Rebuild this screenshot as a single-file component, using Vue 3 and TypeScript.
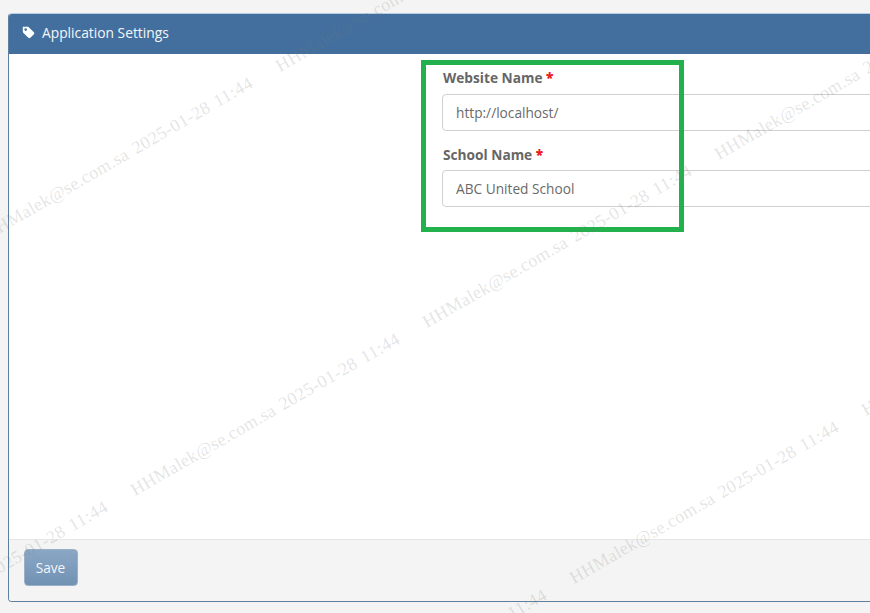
<script setup lang="ts">
interface Mark { x: number; y: number }
const marks: Mark[] = []
for (let i = -2; i <= 3; i++) {
  for (let j = -2; j <= 2; j++) {
    const x = 132 + i * 292 + j * 147
    const y = 482 - i * 168 + j * 256
    if (x > -340 && x < 880 && y > -20 && y < 790) marks.push({ x, y })
  }
}
const text = 'HHMalek@se.com.sa 2025-01-28 11:44'
</script>

<template>
  <div class="page">
    <section class="panel">
      <header class="panel-head">
        <svg class="tag" viewBox="0 0 16 16" aria-hidden="true">
          <path d="M1 1h6c.5 0 1 .2 1.3.5l6.3 6.3c.7.7.7 1.8 0 2.5l-4.3 4.3c-.7.7-1.8.7-2.5 0L1.5 8.300c-.3-.3-.5-.8-.5-1.300V1zm3.500 1.800a1.600 1.600 0 1 0 0 3.200 1.600 1.600 0 0 0 0-3.200z" fill-rule="evenodd" />
        </svg>
        <span>Application Settings</span>
      </header>
      <div class="panel-body">
        <form class="form">
          <div class="field">
            <label>Website Name <b>*</b></label>
            <input type="text" value="http://localhost/" />
          </div>
          <div class="field">
            <label>School Name <b>*</b></label>
            <input type="text" value="ABC United School" />
          </div>
        </form>
      </div>
      <footer class="panel-foot">
        <button type="button" class="save">Save</button>
      </footer>
    </section>
    <div class="highlight"></div>
    <div class="marks">
      <span v-for="m in marks" :key="m.x + '-' + m.y" class="mark" :style="{ left: m.x + 'px', top: m.y + 'px' }">{{ text }}</span>
    </div>
  </div>
</template>

<style>
html, body { margin: 0; height: 100%; overflow: hidden; background: #f4f4f4; }
</style>

<style scoped>
.page {
  position: relative;
  width: 870px;
  height: 613px;
  overflow: hidden;
  padding: 13px 0 0 8px;
  box-sizing: border-box;
  font-family: "Open Sans", sans-serif;
  color: #666;
}
.panel {
  width: 1200px;
  height: 589px;
  box-sizing: border-box;
  display: flex;
  flex-direction: column;
  background: #fff;
  border: 1px solid #5f7f9f;
  border-top-color: #b9cde2;
  border-radius: 4px;
  overflow: hidden;
}
.panel-head {
  height: 40px;
  flex: none;
  display: flex;
  align-items: center;
  gap: 7px;
  padding: 0 0 3px 13px;
  box-sizing: border-box;
  background: #436f9e;
  color: #f4f7fa;
  font-size: 13.8px;
}
.tag { width: 13px; height: 13px; fill: #fff; margin-top: -1px; }
.panel-body {
  flex: 1;
  padding: 12px 0 0 433px;
}
.form { width: 700px; }
.field { margin-bottom: 11px; }
label {
  display: block;
  height: 28px;
  padding-left: 1px;
  box-sizing: border-box;
  font-size: 13.7px;
  line-height: 24px;
  font-weight: 700;
  color: #666;
}
.field + .field label { padding-top: 1px; }
label b { color: #ed1c24; }
input {
  display: block;
  width: 100%;
  height: 37px;
  box-sizing: border-box;
  padding: 0 13px;
  font: 13.7px "Open Sans", sans-serif;
  color: #6a6a6a;
  background: #fff;
  border: 1px solid #d0d0d0;
  border-radius: 4px;
}
.panel-foot {
  height: 62px;
  flex: none;
  box-sizing: border-box;
  padding: 9px 15px;
  background: #f4f4f4;
  border-top: 1px solid #e6e6e6;
}
.save {
  width: 54px;
  height: 37px;
  padding: 0 1px 0 0;
  font: 13.7px "Open Sans", sans-serif;
  color: #f2f5f8;
  background: linear-gradient(#8aa7c4, #7292b4);
  border: 1px solid #9ab0c8;
  border-radius: 4px;
}
.highlight {
  position: absolute;
  left: 421px;
  top: 60px;
  width: 263px;
  height: 172px;
  box-sizing: border-box;
  border: 5px solid #22b14c;
}
.marks { position: absolute; inset: 0; pointer-events: none; overflow: hidden; }
.mark {
  position: absolute;
  white-space: nowrap;
  font-family: "Liberation Serif", serif;
  font-size: 18px;
  line-height: 18px;
  letter-spacing: 0.34px;
  word-spacing: 2px;
  color: rgba(120, 120, 120, 0.2);
  transform: rotate(-30deg);
  transform-origin: 0 50%;
}
</style>
